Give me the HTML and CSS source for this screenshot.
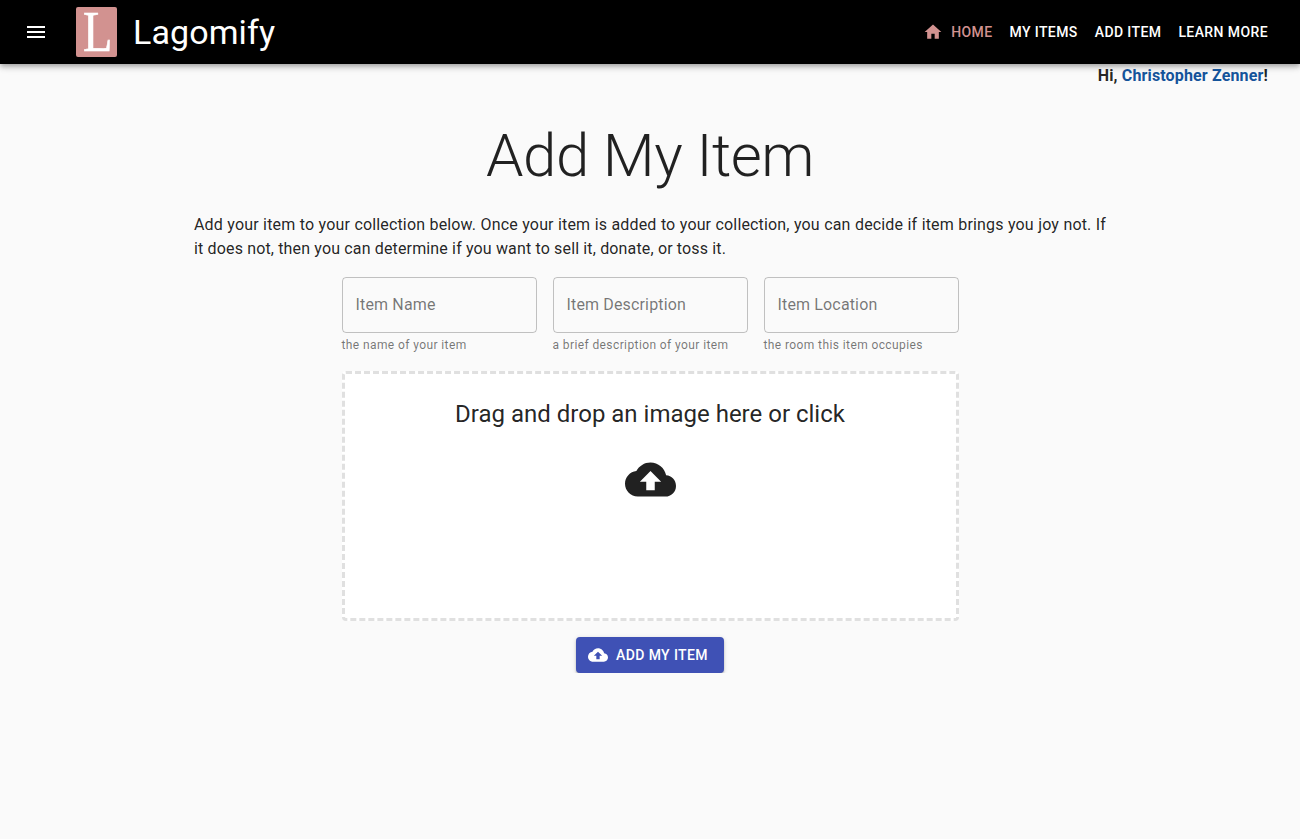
FILE: index.html
```html
<!DOCTYPE html>
<html lang="en">
<head>
<meta charset="utf-8">
<title>Lagomify</title>
<link rel="stylesheet" href="styles.css">
</head>
<body>
<header class="app-bar">
  <svg class="menu-icon" viewBox="0 0 24 24"><path d="M3 18h18v-2H3v2zm0-5h18v-2H3v2zm0-7v2h18V6H3z"/></svg>
  <div class="logo"><span class="logo-letter">L</span></div>
  <div class="brand">Lagomify</div>
  <nav class="nav">
    <a class="nav-link active"><svg class="home-icon" viewBox="0 0 24 24"><path d="M10 20v-6h4v6h5v-8h3L12 3 2 12h3v8z"/></svg>Home</a>
    <a class="nav-link">My Items</a>
    <a class="nav-link">Add Item</a>
    <a class="nav-link">Learn More</a>
  </nav>
</header>
<div class="greeting">Hi, <span class="user">Christopher Zenner</span>!</div>
<main class="content">
  <h1 class="title">Add My Item</h1>
  <p class="intro">Add your item to your collection below. Once your item is added to your collection, you can decide if item brings you joy not. If it does not, then you can determine if you want to sell it, donate, or toss it.</p>
  <form class="form">
    <div class="fields">
      <div class="field"><div class="input">Item Name</div><p class="helper">the name of your item</p></div>
      <div class="field"><div class="input">Item Description</div><p class="helper">a brief description of your item</p></div>
      <div class="field"><div class="input">Item Location</div><p class="helper">the room this item occupies</p></div>
    </div>
    <div class="dropzone">
      <p class="drop-text">Drag and drop an image here or click</p>
      <svg class="cloud" viewBox="0 0 24 24"><path d="M19.35 10.04C18.67 6.59 15.64 4 12 4 9.11 4 6.6 5.64 5.35 8.04 2.34 8.36 0 10.91 0 14c0 3.31 2.69 6 6 6h13c2.76 0 5-2.24 5-5 0-2.64-2.05-4.78-4.65-4.96zM14 13v4h-4v-4H7l5-5 5 5h-3z"/></svg>
    </div>
    <button class="submit" type="button"><svg class="submit-icon" viewBox="0 0 24 24"><path d="M19.35 10.04C18.67 6.59 15.64 4 12 4 9.11 4 6.6 5.64 5.35 8.04 2.34 8.36 0 10.91 0 14c0 3.31 2.69 6 6 6h13c2.76 0 5-2.24 5-5 0-2.64-2.05-4.78-4.65-4.96zM14 13v4h-4v-4H7l5-5 5 5h-3z"/></svg>Add My Item</button>
  </form>
</main>
</body>
</html>
```
FILE: styles.css
```css
* { box-sizing: border-box; }
body { margin: 0; background: #fafafa; color: rgba(0,0,0,.87); font-family: Roboto, sans-serif; }
p, h1 { margin: 0; }
svg { fill: currentColor; flex-shrink: 0; }
.app-bar { height: 64px; display: flex; align-items: center; padding: 0 32px 0 24px; background: #000; color: #fff;
  box-shadow: 0 2px 4px -1px rgba(0,0,0,.2), 0 4px 5px rgba(0,0,0,.14), 0 1px 10px rgba(0,0,0,.12); }
.menu-icon { width: 24px; height: 24px; }
.logo { width: 41px; height: 50px; margin-left: 28px; background: #d29290; border-radius: 2px; display: flex; align-items: center; justify-content: center; font: 56px/50px "Liberation Serif", serif; }
.logo-letter { transform: translate(1.5px, 0) scaleX(.86); -webkit-text-stroke: .6px #fff; }
.brand { margin-left: 16px; font-size: 34px; line-height: 42px; letter-spacing: .1px; }
.nav { margin-left: auto; display: flex; gap: 17px; }
.nav-link { display: flex; align-items: center; font-size: 14px; font-weight: 500; line-height: 24px; letter-spacing: .4px; text-transform: uppercase; }
.active { color: #d29290; }
.home-icon { width: 20px; height: 20px; margin-right: 8px; }
.greeting { height: 24px; padding-right: 32px; text-align: right; font-size: 16px; font-weight: 700; line-height: 24px; letter-spacing: .15px; }
.user { color: #14539a; }
.content { width: 912px; margin: 0 auto; padding-top: 32px; }
.title { text-align: center; font-size: 60px; font-weight: 300; line-height: 72px; letter-spacing: -.5px; }
.intro { margin-top: 21px; font-size: 16px; line-height: 24px; letter-spacing: .15px; text-align: justify; }
.form { width: 617px; margin: 16px auto 0; }
.fields { display: grid; grid-template-columns: repeat(3, 195px); gap: 16px; }
.input { height: 56px; padding: 0 13px; border: 1px solid rgba(0,0,0,.23); border-radius: 4px; color: rgba(0,0,0,.54); font-size: 16px; line-height: 54px; letter-spacing: .15px; }
.helper { margin-top: 2px; color: rgba(0,0,0,.54); font-size: 12px; line-height: 20px; letter-spacing: .4px; }
.dropzone { height: 250px; margin-top: 16px; border: 3px dashed rgba(0,0,0,.12); border-radius: 4px; background: #fff; display: flex; flex-direction: column; align-items: center; }
.drop-text { margin-top: 24px; font-size: 24px; line-height: 32px; }
.cloud { width: 51px; height: 51px; margin-top: 24px; }
.submit { display: flex; align-items: center; width: 148px; height: 36px; margin: 16px auto 0; padding: 0 12px; border: 0; border-radius: 4px; background: #3f51b5; color: #fff; font: 500 14px/24px Roboto, sans-serif; letter-spacing: .4px; text-transform: uppercase; white-space: nowrap;
  box-shadow: 0 3px 1px -2px rgba(0,0,0,.2), 0 2px 2px rgba(0,0,0,.18), 0 1px 5px rgba(0,0,0,.14); }
.submit-icon { width: 20px; height: 20px; margin-right: 8px; }
```
